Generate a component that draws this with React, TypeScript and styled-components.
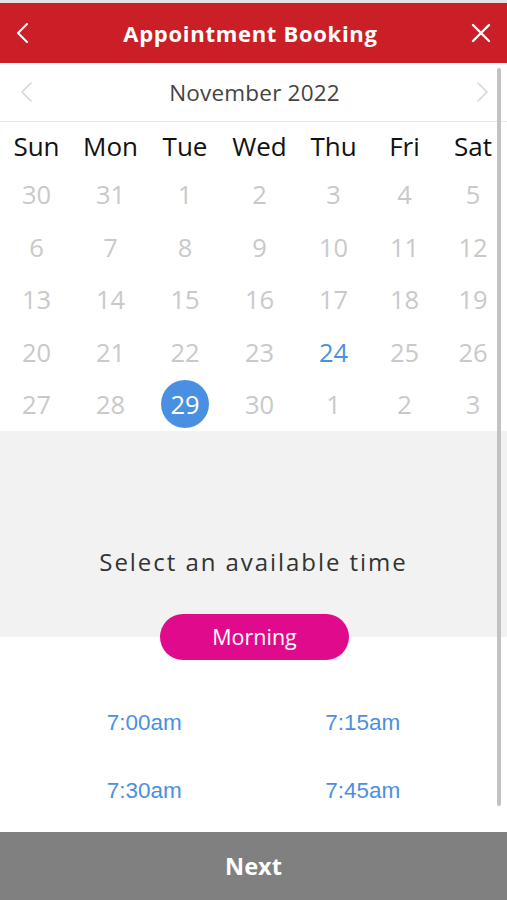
import React from "react";
import styled, { createGlobalStyle } from "styled-components";

const Global = createGlobalStyle`
  html, body { margin: 0; padding: 0; background: #fff; }
  body { font-family: "Open Sans", "Noto Sans", sans-serif; }
  * { box-sizing: border-box; }
`;

const Screen = styled.div`
  position: relative;
  width: 507px;
  height: 900px;
  display: flex;
  flex-direction: column;
  overflow: hidden;
  background: #fff;
`;

const TopStrip = styled.div`
  height: 3px;
  background: #e2e2e2;
`;

const Header = styled.header`
  height: 60px;
  background: #cb1f27;
  display: flex;
  align-items: center;
  justify-content: space-between;
  padding: 0 14px 0 10px;
`;

const Title = styled.h1`
  margin: 0 0 0 -2px;
  color: #fff;
  font-family: "Open Sans", sans-serif;
  font-weight: 700;
  font-size: 22px;
  letter-spacing: 0.7px;
`;

const IconButton = styled.button`
  border: 0;
  background: none;
  padding: 0;
  width: 24px;
  height: 24px;
  display: flex;
  align-items: center;
  justify-content: center;
`;

const MonthBar = styled.div`
  height: 59px;
  display: flex;
  align-items: center;
  justify-content: space-between;
  padding: 0 17px 0 19px;
  border-bottom: 1px solid #e8e8e8;
`;

const MonthLabel = styled.div`
  font-size: 22.5px;
  color: #444;
  letter-spacing: 0.2px;
`;

const CalGrid = styled.div`
  display: grid;
  grid-template-columns: 73px 75px 74px 75px 73px 69px 68px;
  grid-auto-rows: 52.5px;
`;

const WeekRow = styled(CalGrid)`
  grid-auto-rows: 46px;
`;

const WeekDay = styled.div`
  display: flex;
  align-items: center;
  justify-content: center;
  font-size: 26px;
  color: #111;
  padding-top: 1px;
`;

const DayCell = styled.div`
  display: flex;
  align-items: center;
  justify-content: center;
`;

const Day = styled.span<{ $variant?: "muted" | "today" | "selected" }>`
  width: 48px;
  height: 48px;
  border-radius: 50%;
  display: flex;
  align-items: center;
  justify-content: center;
  font-size: 25.5px;
  color: ${(p) =>
    p.$variant === "today" ? "#4a90e2" : p.$variant === "selected" ? "#fff" : "#c9c9c9"};
  background: ${(p) => (p.$variant === "selected" ? "#4a90e2" : "transparent")};
`;

const TimePanel = styled.div`
  height: 183px;
  background: #f2f2f2;
  display: flex;
  align-items: flex-end;
  justify-content: center;
  padding-bottom: 36px;
`;

const PanelText = styled.div`
  font-size: 24px;
  color: #333;
  letter-spacing: 1.95px;
`;

const PillRow = styled.div`
  height: 46px;
  display: flex;
  justify-content: center;
  background: linear-gradient(#f2f2f2 50%, #fff 50%);
`;

const Pill = styled.button`
  width: 189px;
  height: 46px;
  margin-left: 2px;
  border: 0;
  border-radius: 23px;
  background: #df0a8c;
  color: #fff;
  font-family: "Open Sans", sans-serif;
  font-size: 21.5px;
`;

const Times = styled.div`
  display: grid;
  grid-template-columns: 1fr 1fr;
  grid-auto-rows: 68px;
  padding: 29px 35px 0;
`;

const TimeSlot = styled.div`
  display: flex;
  align-items: center;
  justify-content: center;
  font-family: "Liberation Sans", Arial, sans-serif;
  font-size: 22.5px;
  color: #4a90e2;
`;

const Spacer = styled.div`
  flex: 1;
`;

const NextButton = styled.button`
  height: 68px;
  border: 0;
  background: #808080;
  color: #fff;
  font-family: "Open Sans", sans-serif;
  font-weight: 700;
  font-size: 23.5px;
`;

const Scrollbar = styled.div`
  position: absolute;
  right: 6px;
  top: 68px;
  width: 4px;
  height: 738px;
  border-radius: 2px;
  background: #c2c2c2;
`;

const Chevron = ({ dir, color, w }: { dir: "left" | "right"; color: string; w: number }) => (
  <svg width="14" height="22" viewBox="0 0 14 22" fill="none">
    <path
      d={dir === "left" ? "M12 2 L3 11 L12 20" : "M2 2 L11 11 L2 20"}
      stroke={color}
      strokeWidth={w}
      strokeLinecap="round"
      strokeLinejoin="round"
    />
  </svg>
);

const weekdays = ["Sun", "Mon", "Tue", "Wed", "Thu", "Fri", "Sat"];
const days = [
  30, 31, 1, 2, 3, 4, 5,
  6, 7, 8, 9, 10, 11, 12,
  13, 14, 15, 16, 17, 18, 19,
  20, 21, 22, 23, 24, 25, 26,
  27, 28, 29, 30, 1, 2, 3,
];

export default function App() {
  return (
    <>
      <Global />
      <Screen>
        <TopStrip />
        <Header>
          <IconButton aria-label="Back">
            <Chevron dir="left" color="#fff" w={2} />
          </IconButton>
          <Title>Appointment Booking</Title>
          <IconButton aria-label="Close">
            <svg width="20" height="20" viewBox="0 0 20 20">
              <path d="M2 2 L18 18 M18 2 L2 18" stroke="#fff" strokeWidth="2.4" strokeLinecap="round" />
            </svg>
          </IconButton>
        </Header>
        <MonthBar>
          <Chevron dir="left" color="#d6d6d6" w={1.6} />
          <MonthLabel>November 2022</MonthLabel>
          <Chevron dir="right" color="#d6d6d6" w={1.6} />
        </MonthBar>
        <WeekRow>
          {weekdays.map((d) => (
            <WeekDay key={d}>{d}</WeekDay>
          ))}
        </WeekRow>
        <CalGrid>
          {days.map((d, i) => (
            <DayCell key={i}>
              <Day $variant={i === 30 ? "selected" : i === 25 ? "today" : "muted"}>{d}</Day>
            </DayCell>
          ))}
        </CalGrid>
        <TimePanel>
          <PanelText>Select an available time</PanelText>
        </TimePanel>
        <PillRow>
          <Pill>Morning</Pill>
        </PillRow>
        <Times>
          <TimeSlot>7:00am</TimeSlot>
          <TimeSlot>7:15am</TimeSlot>
          <TimeSlot>7:30am</TimeSlot>
          <TimeSlot>7:45am</TimeSlot>
        </Times>
        <Spacer />
        <NextButton>Next</NextButton>
        <Scrollbar />
      </Screen>
    </>
  );
}
